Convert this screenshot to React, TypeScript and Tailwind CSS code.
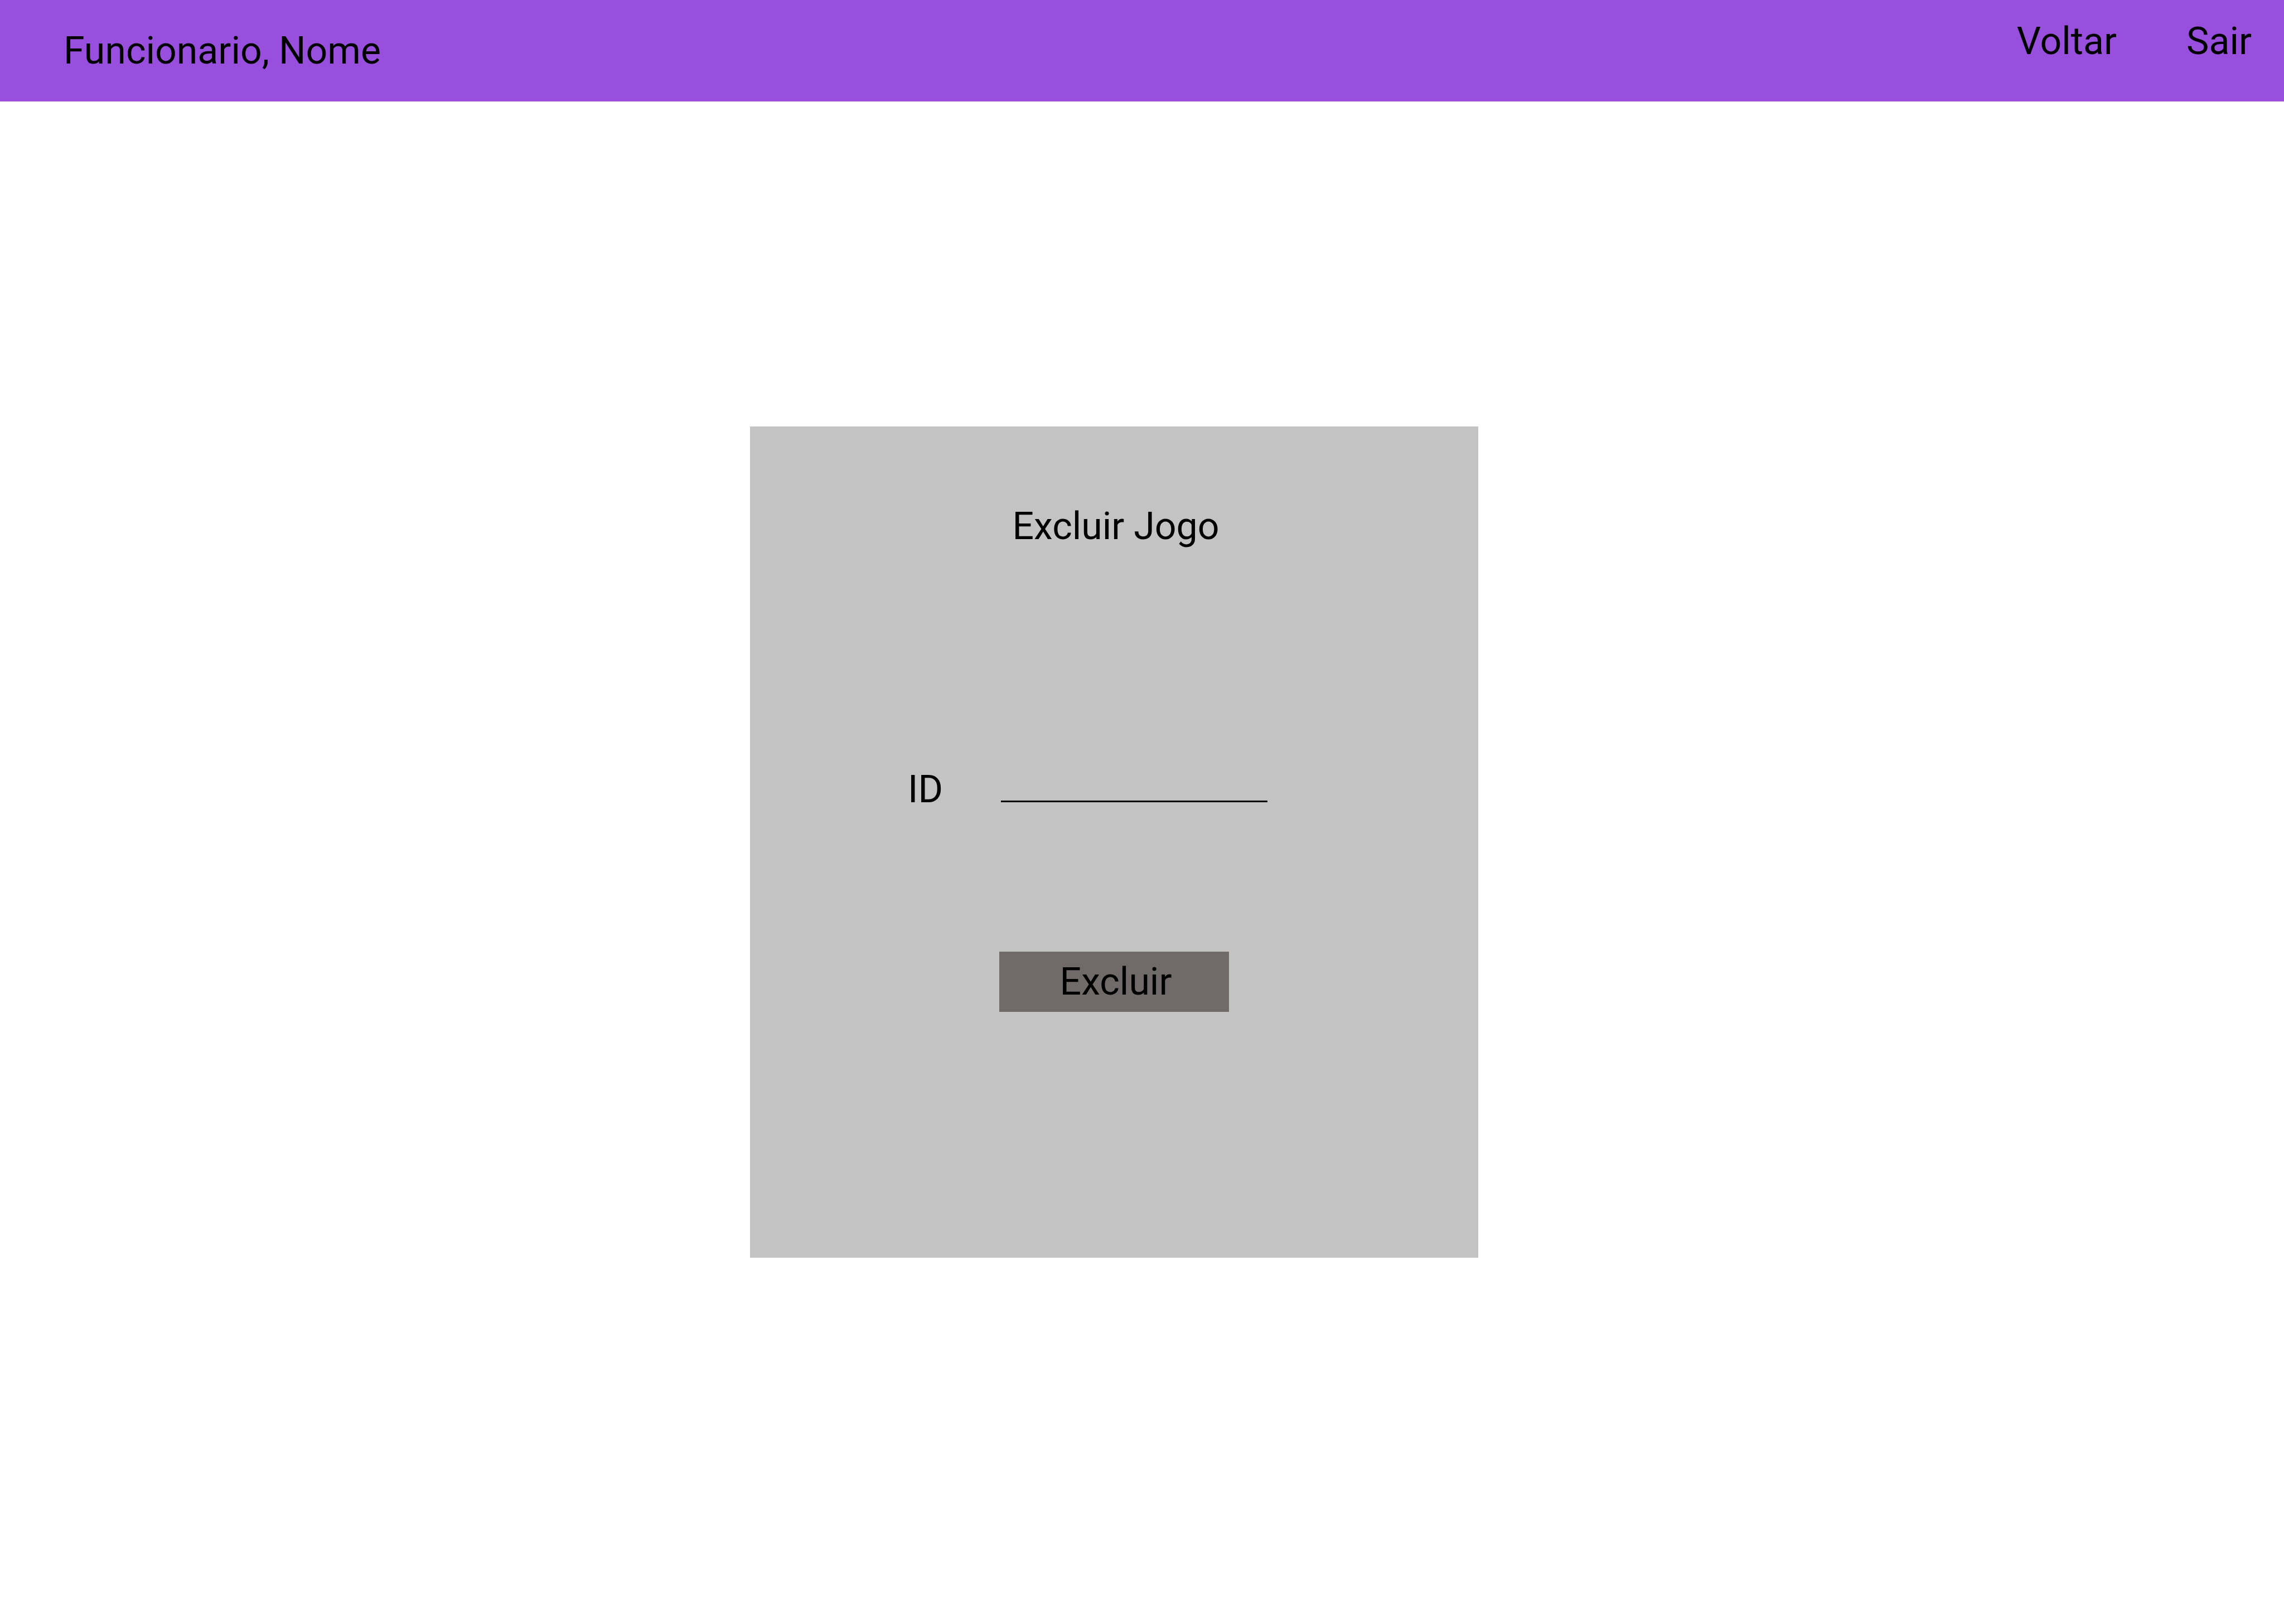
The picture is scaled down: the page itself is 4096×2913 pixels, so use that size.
export default function App() {
  return (
    <div className="min-h-screen bg-white font-['Roboto',sans-serif] text-[68px] leading-[80px] text-black">
      <header className="flex min-h-[182px] items-center justify-between bg-[#994fdd] pl-[114px] pr-[58px]">
        <p>Funcionario, Nome</p>
        <nav className="flex gap-[125px] self-start pt-[34px]">
          <a href="#voltar">Voltar</a>
          <a href="#sair">Sair</a>
        </nav>
      </header>

      <main className="flex justify-center pr-[100px] pt-[583px]">
        <form
          className="flex w-full max-w-[1306px] flex-col items-center bg-[#c3c3c3] pb-[441px] pt-[139px]"
          onSubmit={(event) => event.preventDefault()}
        >
          <h1 className="pl-[6px]">Excluir Jogo</h1>

          <div className="mt-[392px] flex items-start gap-[104px] self-start pl-[283px]">
            <label htmlFor="game-id">ID</label>
            <input
              id="game-id"
              name="id"
              type="text"
              className="h-[63px] w-[478px] border-b-[3px] border-black bg-transparent outline-none"
            />
          </div>

          <button type="submit" className="mt-[251px] w-[412px] bg-[#716a6a] py-[14px] pl-[6px]">
            Excluir
          </button>
        </form>
      </main>
    </div>
  );
}
